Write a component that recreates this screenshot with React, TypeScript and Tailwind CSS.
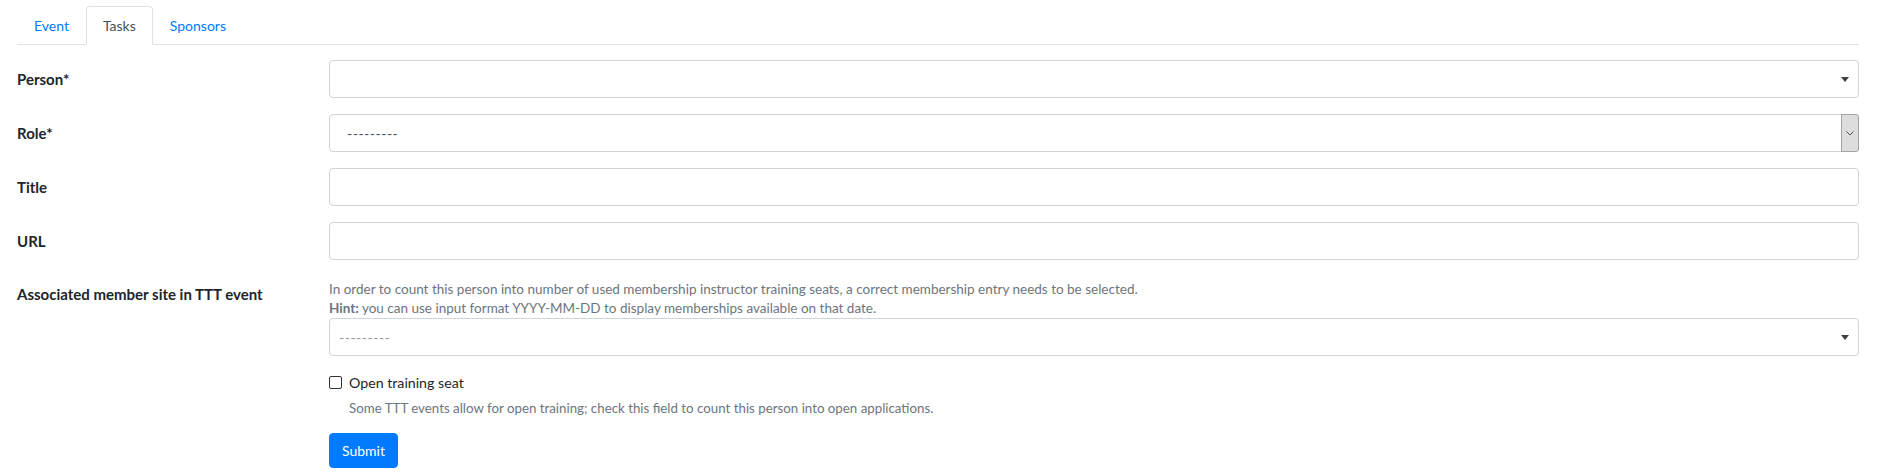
import React from "react";

function Select2({ placeholder }: { placeholder?: string }) {
  return (
    <div className="flex h-[38px] items-center rounded-[4px] border border-[#ced4da] bg-white pl-[9px] pr-[8px]">
      <span className="flex-1 text-[14px] leading-[21px] tracking-[0.5px] text-[#999]">{placeholder}</span>
      <svg width="8" height="5" viewBox="0 0 8 5" className="mr-[1px]">
        <path d="M0 0h8L4 5z" fill="#3d3d3d" />
      </svg>
    </div>
  );
}

function TextInput() {
  return <div className="h-[38px] rounded-[4px] border border-[#ced4da] bg-white" />;
}

function Row({ label, children }: { label: string; children: React.ReactNode }) {
  return (
    <div className="mb-4 flex items-center">
      <label className="w-[312px] shrink-0 text-[15px] font-bold leading-[21px] text-[#212529]">{label}</label>
      <div className="flex-1">{children}</div>
    </div>
  );
}

export default function App() {
  return (
    <div className="min-h-screen bg-white pl-[17px] pr-[23px] pt-[6px] font-['Lato',sans-serif] text-[14px] text-[#212529]">
      <ul className="flex border-b border-[#dee2e6]">
        <li className="-mb-px">
          <a className="block border border-transparent px-4 py-2 leading-[21px] text-[#007bff]">Event</a>
        </li>
        <li className="-mb-px">
          <a className="block rounded-t-[4px] border border-[#dee2e6] border-b-white bg-white px-4 py-2 leading-[21px] text-[#495057]">
            Tasks
          </a>
        </li>
        <li className="-mb-px">
          <a className="block border border-transparent px-4 py-2 leading-[21px] text-[#007bff]">Sponsors</a>
        </li>
      </ul>

      <form className="mt-[15px]">
        <Row label="Person*">
          <Select2 />
        </Row>
        <Row label="Role*">
          <div className="flex h-[38px] items-stretch rounded-[4px] border border-[#ced4da] bg-white">
            <span className="flex flex-1 items-center pl-[17px] text-[14px] leading-[21px] tracking-[0.5px] text-[#495057]">
              ---------
            </span>
            <div className="-my-px -mr-px flex w-[18px] items-center justify-center rounded-r-[3px] border border-[#a3a3a3] bg-[#dddddd]">
              <svg width="8" height="5" viewBox="0 0 8 5">
                <path d="M0.5 0.5L4 4L7.5 0.5" fill="none" stroke="#505050" strokeWidth="1" />
              </svg>
            </div>
          </div>
        </Row>
        <Row label="Title">
          <TextInput />
        </Row>
        <Row label="URL">
          <TextInput />
        </Row>

        <div className="flex items-start">
          <label className="w-[312px] shrink-0 pt-[8px] text-[15px] font-bold leading-[21px] text-[#212529]">
            Associated member site in TTT event
          </label>
          <div className="flex-1">
            <p className="mt-[4px] text-[13.5px] leading-[19px] text-[#6c757d]">
              In order to count this person into number of used membership instructor training seats, a correct membership entry needs to be selected.
              <br />
              <b>Hint:</b> you can use input format YYYY-MM-DD to display memberships available on that date.
            </p>
            <Select2 placeholder="---------" />

            <div className="mt-4 flex items-center">
              <span className="h-[13px] w-[13px] rounded-[2px] border border-[#333]" />
              <span className="ml-[7px] text-[14.2px] leading-[21px] text-[#212529]">Open training seat</span>
            </div>
            <p className="mt-[6px] pl-[20px] text-[13.3px] leading-[19px] text-[#6c757d]">
              Some TTT events allow for open training; check this field to count this person into open applications.
            </p>

            <button
              type="button"
              className="mt-[15px] rounded-[4px] border border-[#007bff] bg-[#007bff] px-3 py-[6px] text-[14px] leading-[21px] text-white"
            >
              Submit
            </button>
          </div>
        </div>
      </form>
    </div>
  );
}
